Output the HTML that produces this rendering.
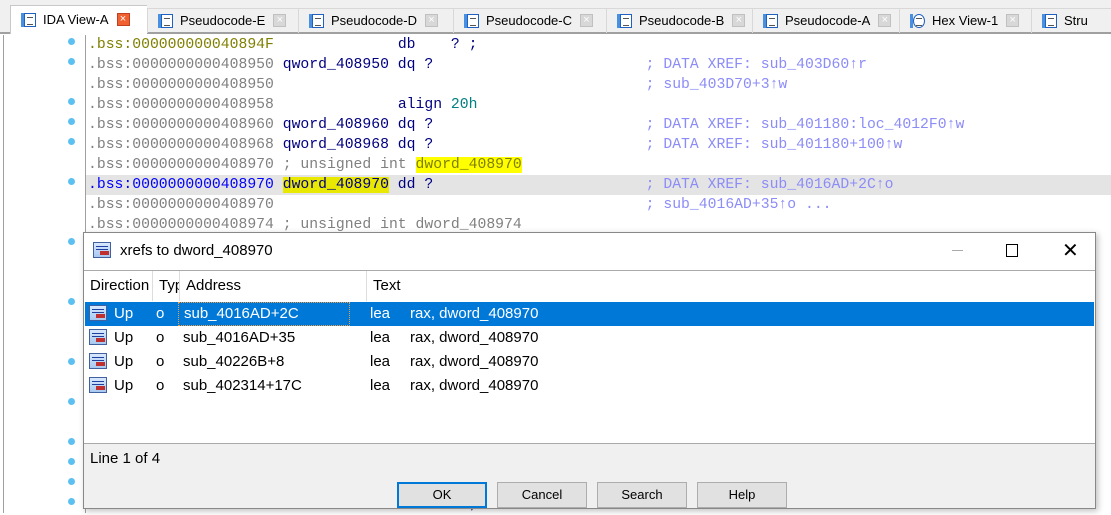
<!DOCTYPE html>
<html><head><meta charset="utf-8"><style>
*{margin:0;padding:0;box-sizing:border-box}
body{width:1111px;height:513px;overflow:hidden;background:#fff;position:relative;font-family:"Liberation Sans",Arial,sans-serif}
.abs{position:absolute}
#tabs{left:0;top:0;width:1111px;height:34px;background:#f0f0f0;border-bottom:2px solid #a0a0a0}
.tab{position:absolute;top:8px;height:25px;border-left:1px solid #d8d8d8;border-top:1px solid #d8d8d8;font-size:13px;line-height:24px;color:#000;white-space:nowrap;padding-left:32px}
.tab.act{background:#fff;top:5px;height:29px;line-height:28px;border-color:#c8c8c8}
.ti{position:absolute;left:13px;top:5px;width:12px;height:14px;border:1px solid #2060c0;background:#fff}
.act .ti{top:7px}
.ti:before{content:"";position:absolute;left:-4px;top:-1px;width:3px;height:14px;background:#4a90e0}
.ti:after{content:"";position:absolute;left:2px;top:3px;width:6px;height:6px;border-top:1px solid #555;border-bottom:1px solid #555}
.tx{display:inline-block;width:13px;height:13px;background:#d8d8d8;border:1px solid #c0c0c0;vertical-align:middle;margin-left:8px;position:relative;top:-1px;color:#fff;font-size:11px;line-height:11px;text-align:center}
.act .tx{background:#f06030;border-color:#c04020}
#code{left:85px;top:35px;width:1026px;height:478px;border-left:1px solid #a0a0a0;font-family:"Liberation Mono","DejaVu Sans Mono",monospace;font-size:14.75px}
.ln{position:absolute;left:2px;height:20px;line-height:20px;white-space:pre;color:#808080}
.dot{position:absolute;left:68px;width:7px;height:7px;border-radius:50%;background:#5cc0f0}
.n{color:#000080}.k{color:#000080}.c{color:#8c8cf8}.g{color:#008080}
.y{background:#ffff00;color:#808000}.y2{background:#e8e800;color:#000080}
#dlg{left:83px;top:232px;width:1013px;height:277px;background:#f0f0f0;border:1px solid #888;box-shadow:2px 2px 6px rgba(0,0,0,.25)}
#tb{position:absolute;left:0;top:0;width:100%;height:37px;background:#fff;font-size:15px;line-height:36px;padding-left:36px}
.xi{position:absolute;width:18px;height:16px;border:1px solid #4060a0;background:linear-gradient(#d8e8ff,#a8c8f0)}
.xi:after{content:"";position:absolute;left:6px;top:8px;width:9px;height:4px;background:#c03030}
.xi:before{content:"";position:absolute;left:2px;top:3px;width:12px;height:2px;border-top:1px solid #2040a0;border-bottom:1px solid #2040a0}
#list{position:absolute;left:0;top:37px;width:1011px;height:174px;background:#fff;border-top:1px solid #aaa;border-bottom:1px solid #aaa;font-size:15px}
.hd{position:absolute;top:0;height:30px;line-height:30px;border-right:1px solid #ddd;padding-left:6px;white-space:nowrap;overflow:hidden}
.row{position:absolute;left:1px;width:1009px;height:24px;line-height:24px;white-space:nowrap}
.row span{position:absolute}
.sel{background:#0078d7;color:#fff}
.btn{position:absolute;top:249px;width:90px;height:26px;background:#e1e1e1;border:1px solid #adadad;font-size:13px;line-height:24px;text-align:center}
</style></head><body>
<div id="tabs" class="abs">
<div class="tab act" style="left:10px;width:137px"><i class="ti"></i>IDA View-A<span class="tx">×</span></div>
<div class="tab" style="left:147px;width:151px"><i class="ti"></i>Pseudocode-E<span class="tx">×</span></div>
<div class="tab" style="left:298px;width:155px"><i class="ti"></i>Pseudocode-D<span class="tx">×</span></div>
<div class="tab" style="left:453px;width:153px"><i class="ti"></i>Pseudocode-C<span class="tx">×</span></div>
<div class="tab" style="left:606px;width:146px"><i class="ti"></i>Pseudocode-B<span class="tx">×</span></div>
<div class="tab" style="left:752px;width:147px"><i class="ti"></i>Pseudocode-A<span class="tx">×</span></div>
<div class="tab" style="left:899px;width:132px"><i class="ti" style="border-radius:50%"></i>Hex View-1<span class="tx">×</span></div>
<div class="tab" style="left:1031px;width:90px"><i class="ti"></i>Stru</div>
</div>
<div class="abs" style="left:3px;top:35px;width:1px;height:478px;background:#a0a0a0"></div>
<div class="dot" style="top:38px"></div><div class="dot" style="top:58px"></div><div class="dot" style="top:98px"></div><div class="dot" style="top:118px"></div><div class="dot" style="top:138px"></div><div class="dot" style="top:178px"></div><div class="dot" style="top:238px"></div><div class="dot" style="top:298px"></div><div class="dot" style="top:358px"></div><div class="dot" style="top:398px"></div><div class="dot" style="top:438px"></div><div class="dot" style="top:458px"></div><div class="dot" style="top:478px"></div><div class="dot" style="top:498px"></div>
<div id="code" class="abs">
<div class="abs" style="left:0;top:140px;width:1026px;height:20px;background:#e4e4e4"></div>
<div class="ln" style="top:0;color:#808000">.bss:000000000040894F              <span class="k">db    ? ;</span></div>
<div class="ln" style="top:20px">.bss:0000000000408950 <span class="n">qword_408950 dq ?</span>                        <span class="c">; DATA XREF: sub_403D60↑r</span></div>
<div class="ln" style="top:40px">.bss:0000000000408950                                          <span class="c">; sub_403D70+3↑w</span></div>
<div class="ln" style="top:60px">.bss:0000000000408958              <span class="k">align </span><span class="g">20h</span></div>
<div class="ln" style="top:80px">.bss:0000000000408960 <span class="n">qword_408960 dq ?</span>                        <span class="c">; DATA XREF: sub_401180:loc_4012F0↑w</span></div>
<div class="ln" style="top:100px">.bss:0000000000408968 <span class="n">qword_408968 dq ?</span>                        <span class="c">; DATA XREF: sub_401180+100↑w</span></div>
<div class="ln" style="top:120px">.bss:0000000000408970 ; unsigned int <span class="y">dword_408970</span></div>
<div class="ln" style="top:140px;color:#0000ff">.bss:0000000000408970 <span class="y2">dword_408970</span><span class="n"> dd ?</span>                        <span class="c">; DATA XREF: sub_4016AD+2C↑o</span></div>
<div class="ln" style="top:160px">.bss:0000000000408970                                          <span class="c">; sub_4016AD+35↑o ...</span></div>
<div class="ln" style="top:180px">.bss:0000000000408974 ; unsigned int dword_408974</div>
<div class="ln" style="top:460px;color:#808000">.bss:0000000000408984              <span class="k">db    ? ;</span></div>
</div>
<div id="dlg" class="abs">
<div id="tb"><i class="xi" style="left:9px;top:9px"></i>xrefs to dword_408970
<span style="position:absolute;left:868px;top:17px;width:11px;height:1px;background:#aaa"></span>
<span style="position:absolute;left:922px;top:11px;width:12px;height:13px;border:1px solid #000"></span>
<span style="position:absolute;left:978px;top:0px;font-size:20px">✕</span>
</div>
<div id="list">
<div class="hd" style="left:0;width:69px">Direction</div>
<div class="hd" style="left:69px;width:27px">Type</div>
<div class="hd" style="left:96px;width:187px">Address</div>
<div class="hd" style="left:283px;width:728px;border:none">Text</div>
<div class="row sel" style="top:31px"><i class="xi" style="left:4px;top:3px"></i><span style="left:29px">Up</span><span style="left:71px">o</span><span style="left:93px;top:0;height:24px;width:172px;border:1px dotted #f0a040;padding-left:5px;line-height:22px">sub_4016AD+2C</span><span style="left:285px">lea</span><span style="left:325px">rax, dword_408970</span></div>
<div class="row" style="top:55px"><i class="xi" style="left:4px;top:3px"></i><span style="left:29px">Up</span><span style="left:71px">o</span><span style="left:98px">sub_4016AD+35</span><span style="left:285px">lea</span><span style="left:325px">rax, dword_408970</span></div>
<div class="row" style="top:79px"><i class="xi" style="left:4px;top:3px"></i><span style="left:29px">Up</span><span style="left:71px">o</span><span style="left:98px">sub_40226B+8</span><span style="left:285px">lea</span><span style="left:325px">rax, dword_408970</span></div>
<div class="row" style="top:103px"><i class="xi" style="left:4px;top:3px"></i><span style="left:29px">Up</span><span style="left:71px">o</span><span style="left:98px">sub_402314+17C</span><span style="left:285px">lea</span><span style="left:325px">rax, dword_408970</span></div>
</div>
<div class="abs" style="left:6px;top:216px;font-size:15px;line-height:20px">Line 1 of 4</div>
<div class="btn" style="left:313px;border:2px solid #0078d7;line-height:22px">OK</div>
<div class="btn" style="left:413px">Cancel</div>
<div class="btn" style="left:513px">Search</div>
<div class="btn" style="left:613px">Help</div>
</div>
</body></html>
